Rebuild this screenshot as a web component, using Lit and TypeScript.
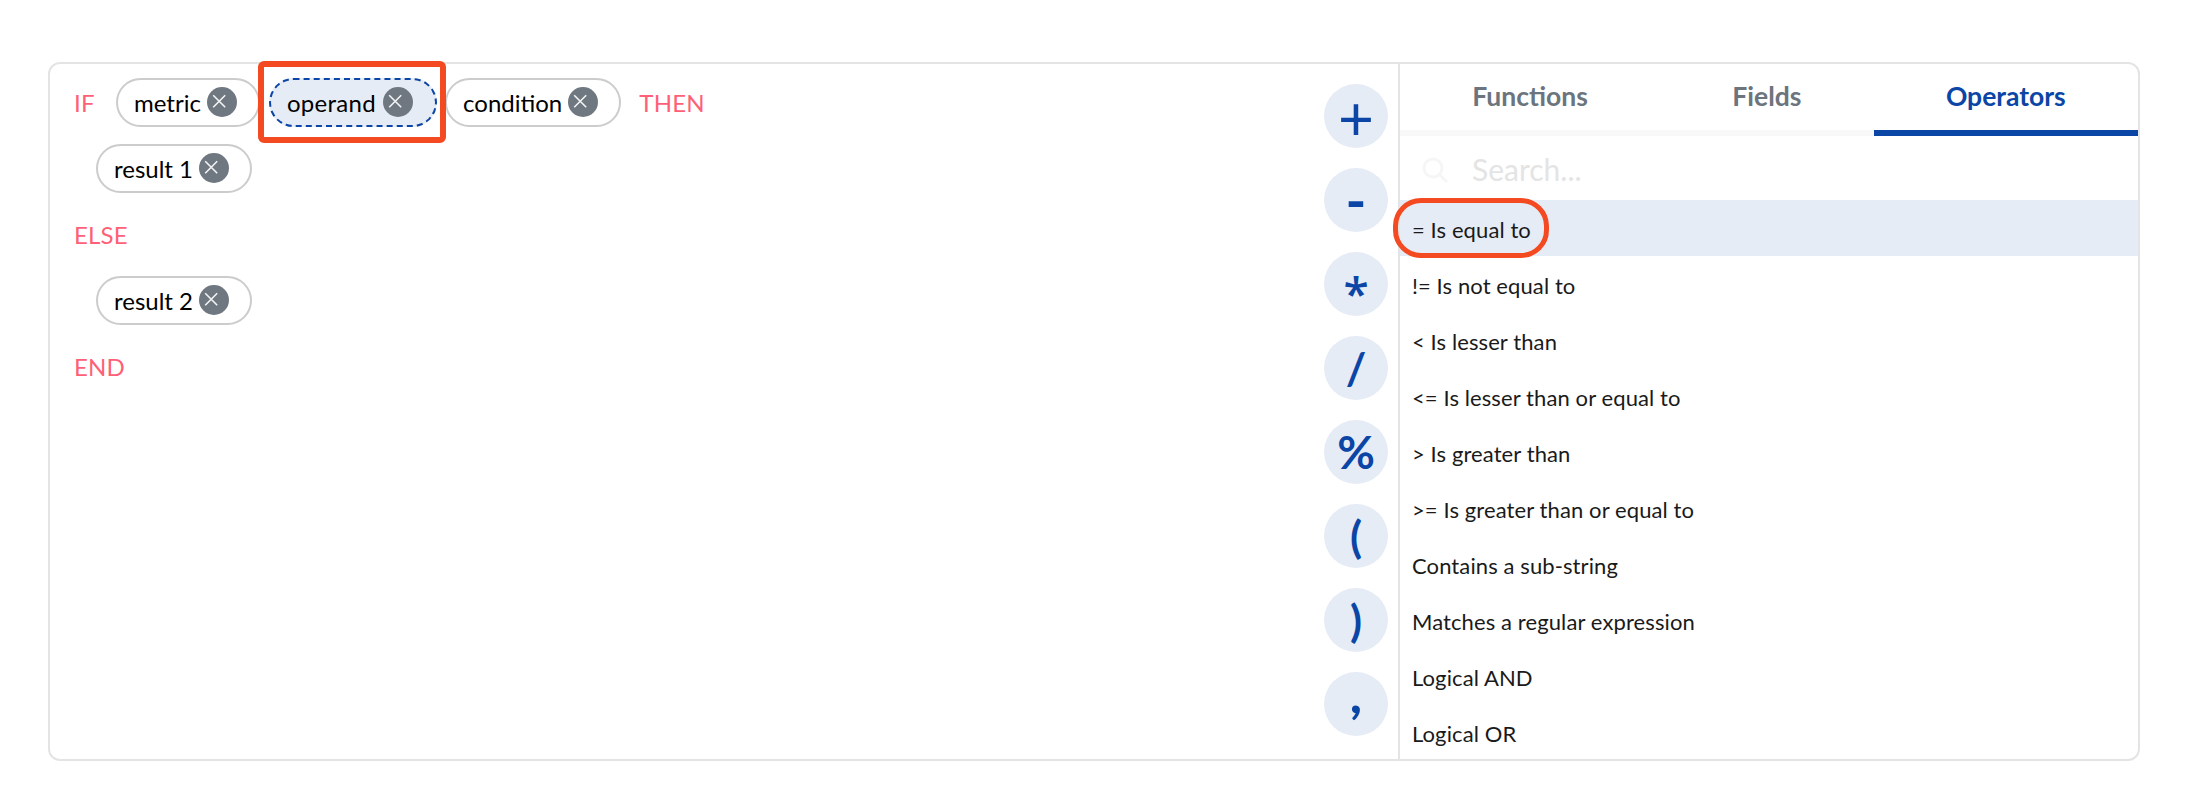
import { LitElement, html, css, svg } from "lit";
import { customElement } from "lit/decorators.js";

const OPS = [
  { c: "+", k: "plus" },
  { c: "-", k: "minus" },
  { c: "*", k: "star" },
  { c: "/", k: "slash" },
  { c: "%", k: "pct" },
  { c: "(", k: "lp" },
  { c: ")", k: "rp" },
  { c: ",", k: "comma" },
];
const ITEMS = [
  "= Is equal to",
  "!= Is not equal to",
  "< Is lesser than",
  "<= Is lesser than or equal to",
  "> Is greater than",
  ">= Is greater than or equal to",
  "Contains a sub-string",
  "Matches a regular expression",
  "Logical AND",
  "Logical OR",
];

@customElement("app-root")
export class AppRoot extends LitElement {
  static styles = css`
    :host {
      display: block;
      width: 2192px;
      height: 804px;
      position: relative;
      background: #fff;
      font-family: "Lato", "Noto Sans", sans-serif;
      color: #000;
      overflow: hidden;
    }
    .page { padding: 62px 52px 0 48px; }
    .card {
      display: flex;
      height: 699px;
      box-sizing: border-box;
      border: 2px solid #e4e4e4;
      border-radius: 12px;
      overflow: hidden;
    }
    .editor { flex: 1; padding: 5px 0 0 24px; min-width: 0; }
    .row { display: flex; align-items: center; height: 66px; }
    .row.indent { padding-left: 22px; }
    .kw { color: #ff5f77; font-size: 24px; letter-spacing: 0.2px; }
    .kw.if { width: 42px; }
    .kw.then { margin-left: 18px; }
    .chip {
      display: flex;
      align-items: center;
      box-sizing: border-box;
      height: 49px;
      border: 2px solid #cccccc;
      border-radius: 25px;
      padding: 0 21px 0 16px;
      font-size: 24px;
      gap: 6px;
    }
    .chip.active {
      background: #e6ecf6;
      border: 2px dashed #0b45a5;
      margin: 0 8px 0 9px;
      padding: 0 22px 0 16px;
      gap: 7px;
      letter-spacing: 0.3px;
    }
    .x { width: 30px; height: 30px; flex: none; display: block; }
    .ops {
      width: 64px;
      flex: none;
      padding: 20px 10px 0 0;
      display: flex;
      flex-direction: column;
      gap: 20px;
    }
    .op {
      width: 64px;
      height: 64px;
      box-sizing: border-box;
      border-radius: 50%;
      background: #e6ecf6;
      color: #0b45a5;
      display: flex;
      align-items: center;
      justify-content: center;
      font-size: 44px;
      font-weight: 700;
      line-height: 1;
    }
    .op.plus { font-size: 62px; font-weight: 400; }
    .op.minus { font-size: 56px; }
    .op.star { font-family: "Open Sans", sans-serif; font-size: 46px; font-weight: 600; padding-top: 16px; }
    .op.pct { font-size: 46px; }
    .op.comma { font-size: 50px; font-weight: 900; padding-bottom: 20px; }
    .panel {
      width: 738px;
      flex: none;
      border-left: 2px solid #e4e4e4;
    }
    .tabs {
      display: flex;
      height: 66px;
      border-bottom: 6px solid #f8f8f8;
    }
    .tab {
      flex: auto;
      display: flex;
      justify-content: center;
      align-items: center;
      font-size: 26.5px;
      font-weight: 700;
      color: #6c757d;
      margin-bottom: -6px;
      padding-bottom: 2px;
      border-bottom: 6px solid transparent;
    }
    .tab.on { color: #0b45a5; border-bottom-color: #0b45a5; }
    .search {
      display: flex;
      align-items: center;
      box-sizing: border-box;
      height: 64px;
      padding: 2px 0 0 22px;
      gap: 24px;
      color: #e4e4e4;
      font-size: 30px;
    }
    .search svg { width: 28px; height: 28px; margin-right: -2px; margin-top: 4px; }
    .item {
      height: 56px;
      box-sizing: border-box;
      padding: 3px 0 0 12px;
      display: flex;
      align-items: center;
      font-size: 22px;
      letter-spacing: 0.1px;
      color: #1a1a1a;
    }
    .item.on { background: #e6ecf6; }
    .mark-rect {
      position: absolute;
      left: 258px;
      top: 61px;
      width: 188px;
      height: 82px;
      box-sizing: border-box;
      border: 6px solid #f44a22;
      border-radius: 6px;
    }
    .mark-oval {
      position: absolute;
      left: 1393px;
      top: 198px;
      width: 156px;
      height: 60px;
      box-sizing: border-box;
      border: 5px solid #f44a22;
      border-radius: 28px;
    }
  `;

  private close() {
    return html`<svg class="x" viewBox="0 0 30 30">
      <circle cx="15" cy="15" r="15" fill="#6f7780"></circle>
      ${svg`<path d="M6.2 8.2 18.2 20.2M18.2 8.2 6.2 20.2" stroke="#f2f3f4" stroke-width="1.6" fill="none"></path>`}
    </svg>`;
  }

  private chip(label: string, active = false) {
    return html`<div class="chip ${active ? "active" : ""}"><span>${label}</span>${this.close()}</div>`;
  }

  render() {
    return html`
      <div class="page">
        <div class="card">
          <div class="editor">
            <div class="row">
              <span class="kw if">IF</span>
              ${this.chip("metric")}${this.chip("operand", true)}${this.chip("condition")}
              <span class="kw then">THEN</span>
            </div>
            <div class="row indent">${this.chip("result 1")}</div>
            <div class="row"><span class="kw">ELSE</span></div>
            <div class="row indent">${this.chip("result 2")}</div>
            <div class="row"><span class="kw">END</span></div>
          </div>
          <div class="ops">
            ${OPS.map((o) => html`<div class="op ${o.k}">${o.c}</div>`)}
          </div>
          <div class="panel">
            <div class="tabs">
              <div class="tab">Functions</div>
              <div class="tab">Fields</div>
              <div class="tab on">Operators</div>
            </div>
            <div class="search">
              <svg viewBox="0 0 28 28" fill="none" stroke="#f6f6f6" stroke-width="3">
                <circle cx="11" cy="11" r="9"></circle>
                <path d="M18 18l7 7"></path>
              </svg>
              <span>Search...</span>
            </div>
            ${ITEMS.map(
              (t, i) => html`<div class="item ${i === 0 ? "on" : ""}">${t}</div>`
            )}
          </div>
        </div>
      </div>
      <div class="mark-rect"></div>
      <div class="mark-oval"></div>
    `;
  }
}
